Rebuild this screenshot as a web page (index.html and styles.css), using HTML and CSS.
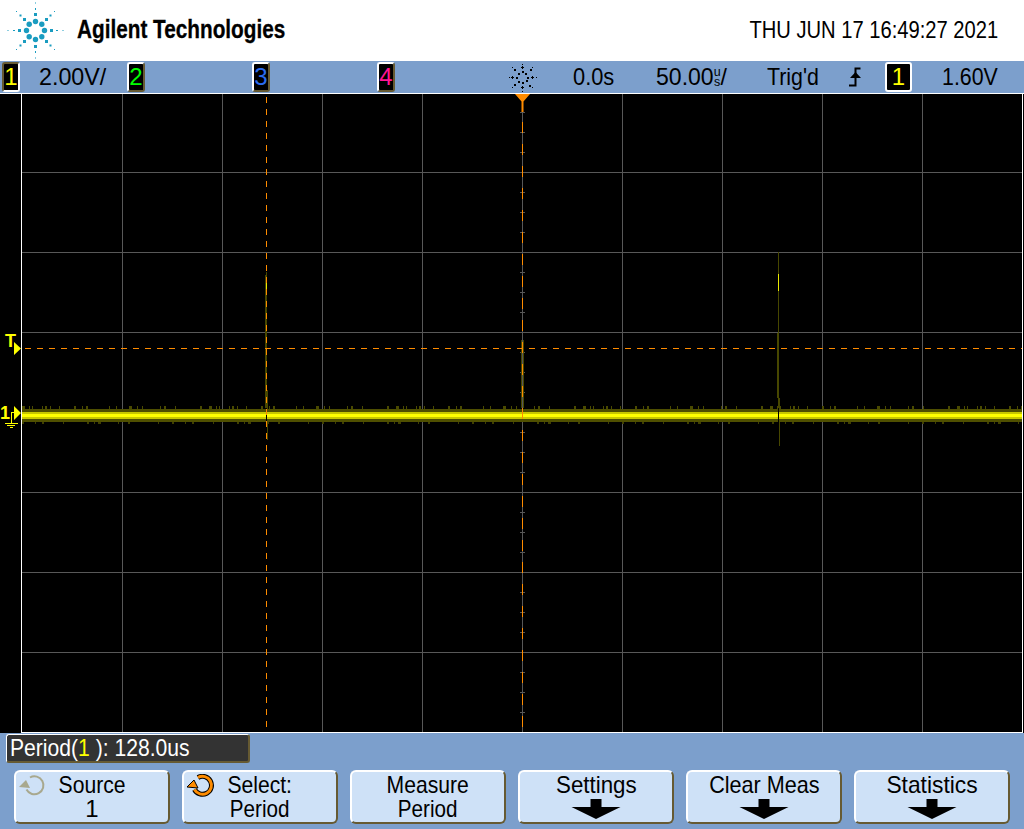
FILE: index.html
```html
<!DOCTYPE html>
<html lang="en">
<head>
    <meta charset="UTF-8">
    <title>Agilent Technologies scope capture</title>
    <link rel="stylesheet" href="styles.css">
</head>
<body>
    <svg class="defs" width="0" height="0">
        <defs>
            <g id="arm">
                <circle cx="0" cy="-9" r="2.7"/>
                <rect x="-1.5" y="-17.5" width="3" height="3"/>
                <rect x="-0.5" y="-22.5" width="1" height="2"/>
                <rect x="-0.5" y="-28" width="1" height="1"/>
                <circle cx="6.3" cy="-6.3" r="2.7"/>
                <rect x="9.5" y="-12.5" width="3" height="3"/>
                <rect x="14" y="-16" width="2" height="2"/>
                <rect x="18.5" y="-19.5" width="1" height="1"/>
            </g>
            <g id="star">
                <use href="#arm"/>
                <use href="#arm" transform="rotate(90)"/>
                <use href="#arm" transform="rotate(180)"/>
                <use href="#arm" transform="rotate(270)"/>
            </g>
            <g id="tinyarm">
                <rect x="-1" y="-6.5" width="2" height="2"/>
                <path d="M-0.5 -11.5h1v1h1v1h-1v1h-1v-1h-1v-1h1z"/>
                <rect x="-0.5" y="-14" width="1" height="1"/>
                <rect x="2.5" y="-5" width="2" height="2"/>
                <rect x="7" y="-8.5" width="2" height="2"/>
                <rect x="9.5" y="-10.5" width="1" height="1"/>
            </g>
            <g id="tinystar">
                <use href="#tinyarm"/>
                <use href="#tinyarm" transform="rotate(90)"/>
                <use href="#tinyarm" transform="rotate(180)"/>
                <use href="#tinyarm" transform="rotate(270)"/>
            </g>
            <path id="softarrow" d="M-5.5 0h11v8h19l-24.500 12l-24.500-12h19z"/>
            <path id="ring" d="M12 3.500A9 9 0 1 1 8.500 15.500"/>
            <path id="ringhead" d="M1 13L8 6L12 14z"/>
        </defs>
    </svg>

    <header class="top">
        <svg class="logo" width="71" height="57" viewBox="-35.5 -28.5 71 57"><use href="#star"/></svg>
        <div class="brand">Agilent Technologies</div>
        <div class="clock">THU JUN 17 16:49:27 2021</div>
    </header>

    <div class="status">
        <span class="chan c1">1</span>
        <span class="val volts">2.00V/</span>
        <span class="chan c2">2</span>
        <span class="chan c3">3</span>
        <span class="chan c4">4</span>
        <svg class="trigstar" width="29" height="29" viewBox="-14.5 -14.5 29 29"><use href="#tinystar"/></svg>
        <span class="val delay">0.0s</span>
        <span class="val tbase">50.00<span class="unit"><i>u</i><i>s</i></span>/</span>
        <span class="val trigd">Trig'd</span>
        <svg class="edge" width="12" height="20" viewBox="0 0 12 20"><path class="edge-line" d="M0 18.500h6.500V1.500h5"/><path d="M1 11L6.500 5L12 11z"/></svg>
        <span class="chan tsrc">1</span>
        <span class="val level">1.60V</span>
    </div>

    <svg class="plot" width="1024" height="640" viewBox="0 93 1024 640">
        <rect x="0" y="93" width="1024" height="640" fill="#000"/>
        <path class="grid" d="M122.500 94V732M222.500 94V732M322.500 94V732M422.500 94V732M522.500 94V732M622.500 94V732M722.500 94V732M822.500 94V732M922.500 94V732M22 172.500H1022M22 252.500H1022M22 332.500H1022M22 492.500H1022M22 572.500H1022M22 652.500H1022"/>
        <path class="grid" d="M520 112.500h5M520 132.500h5M520 152.500h5M520 192.500h5M520 212.500h5M520 232.500h5M520 272.500h5M520 292.500h5M520 312.500h5M520 352.500h5M520 372.500h5M520 392.500h5M520 432.500h5M520 452.500h5M520 472.500h5M520 512.500h5M520 532.500h5M520 552.500h5M520 592.500h5M520 612.500h5M520 632.500h5M520 672.500h5M520 692.500h5M520 712.500h5"/>

        <!-- glitches -->
        <path class="spike" d="M266.500 272V408M265.500 275V408M267.500 390V440M778.500 252V408M777.500 333V398M779.500 398V446M521.500 340V408M523.500 340V408"/>
        <path class="spike-hot" d="M266.500 277v14M778.500 274v17"/>

        <!-- trace -->
        <path class="noise" d="M22 407.500H1022"/>
        <path class="noise low" d="M22 423H1022"/>
        <rect x="22" y="409" width="1000" height="13" fill="#4f4f00"/>
        <rect x="22" y="412" width="1000" height="7" fill="#c8c800"/>
        <rect x="22" y="414" width="1000" height="3" fill="#ff0"/>
        <path class="spike-dark" d="M266.500 409v13M778.500 409v13"/>

        <!-- cursors -->
        <path class="cursor" d="M266.500 97V732M25 348.500H1022"/>
        <path class="cursor long" d="M522.500 100V732"/>
        <path class="trigmark" d="M515 94h15l-6.500 7.500v10.500h-2v-10.500z"/>

        <!-- left markers -->
        <text class="mark" x="5" y="347">T</text>
        <path class="yel" d="M14 342l7 6.500l-7 6.500zM14 406l7 7l-7 7z"/>
        <text class="mark" x="0" y="419">1</text>
        <path class="gnd" d="M14.500 412.500h-3.500v10M5 423.500h13M7 425.500h8M10 427.500h3"/>

        <path class="frame" d="M21.500 93V732.500H1022.500V93M0 93.500H1024"/>
    </svg>

    <div class="bottom">
        <div class="measure"><div class="measure-text">Period(<span class="hl">1</span> ): 128.0us</div></div>
        <div class="keys">
            <div class="key">
                <svg class="knob off" width="28" height="24" viewBox="0 0 28 24"><use class="knob-ring" href="#ring"/><use class="knob-head" href="#ringhead"/></svg>
                <span class="s88">Source</span><span>1</span>
            </div>
            <div class="key">
                <svg class="knob on" width="28" height="24" viewBox="0 0 28 24"><use class="knob-edge" href="#ring"/><use class="knob-ring" href="#ring"/><use class="knob-head" href="#ringhead"/></svg>
                <span class="s88">Select:</span><span class="s86">Period</span>
            </div>
            <div class="key"><span class="s88">Measure</span><span class="s86">Period</span></div>
            <div class="key">
                <span class="s93">Settings</span>
                <svg class="down" width="50" height="20" viewBox="-25 0 50 20"><use href="#softarrow"/></svg>
            </div>
            <div class="key">
                <span class="s90">Clear Meas</span>
                <svg class="down" width="50" height="20" viewBox="-25 0 50 20"><use href="#softarrow"/></svg>
            </div>
            <div class="key">
                <span class="s95">Statistics</span>
                <svg class="down" width="50" height="20" viewBox="-25 0 50 20"><use href="#softarrow"/></svg>
            </div>
        </div>
    </div>
</body>
</html>
```

FILE: styles.css
```css
html, body {
    margin: 0;
    padding: 0;
}

body {
    width: 1024px;
    height: 829px;
    overflow: hidden;
    background: #7c9fcc;
    color: #000;
    font-family: "Liberation Sans", Arial, sans-serif;
    font-size: 24px;
}

svg {
    display: block;
}

.defs {
    position: absolute;
}

/* header */
.top {
    height: 61px;
    background: #fff;
    display: flex;
    align-items: center;
}

.logo {
    fill: #1a9cc0;
    flex: none;
}

.brand {
    margin-left: 6px;
    font-size: 25px;
    font-weight: bold;
    white-space: nowrap;
    -webkit-text-stroke: 0.3px #000;
    padding-bottom: 2px;
    transform: scaleX(0.83);
    transform-origin: left center;
}

.clock {
    margin-left: auto;
    margin-right: 26px;
    padding-bottom: 2px;
    white-space: nowrap;
    transform: scaleX(0.84);
    transform-origin: right center;
}

/* status bar */
.status {
    height: 32px;
    display: flex;
    align-items: center;
}

.val {
    flex: none;
    white-space: nowrap;
    line-height: 32px;
    transform-origin: left center;
}

.chan {
    box-sizing: border-box;
    width: 18px;
    height: 30px;
    flex: none;
    background: #000;
    border: 2px solid;
    border-color: #fff #665a32 #665a32 #fff;
    border-radius: 3px;
    text-align: center;
    line-height: 26px;
    font-size: 24px;
}

.c1 {
    margin-left: 2px;
    color: #ff0;
    border-color: #665a32 #fff #fff #665a32;
}

.c2 {
    margin-left: 21px;
    color: #0f0;
}

.c3 {
    margin-left: 107px;
    color: #2a6cf0;
}

.c4 {
    margin-left: 107px;
    color: #ff1493;
}

.volts {
    margin-left: 19px;
    width: 67px;
    transform: scaleX(0.97);
}

.trigstar {
    margin-left: 113px;
    flex: none;
    fill: #000;
    shape-rendering: crispEdges;
}

.delay {
    margin-left: 36px;
    width: 41px;
    transform: scaleX(0.91);
}

.tbase {
    margin-left: 42px;
    width: 73px;
    display: flex;
    align-items: center;
    transform: scaleX(0.96);
}

.unit {
    display: flex;
    flex-direction: column;
    font-size: 13px;
    line-height: 10px;
    width: 9px;
    align-items: center;
}

.unit i {
    font-style: normal;
}

.trigd {
    margin-left: 38px;
    width: 51px;
    transform: scaleX(0.89);
}

.edge {
    margin-left: 31px;
    flex: none;
    fill: #000;
}

.edge-line {
    fill: none;
    stroke: #000;
    stroke-width: 2;
}

.tsrc {
    margin-left: 24px;
    width: 27px;
    color: #ff0;
    border-color: #fff;
}

.level {
    margin-left: 30px;
    width: 55px;
    transform: scaleX(0.89);
}

/* plot */
.grid {
    stroke: #585858;
    stroke-width: 1;
    fill: none;
    shape-rendering: crispEdges;
}

.spike {
    stroke: #474700;
    stroke-width: 1;
    fill: none;
    shape-rendering: crispEdges;
}

.spike-hot {
    stroke: #e8e800;
    stroke-width: 1;
    fill: none;
    shape-rendering: crispEdges;
}

.spike-dark {
    stroke: #000;
    stroke-width: 1;
    shape-rendering: crispEdges;
}

.noise {
    stroke: #4a4a00;
    stroke-width: 3;
    fill: none;
    stroke-dasharray: 3 4 1 2 1 9 1 2 2 3 1 8 1 14 2 6 1 3 2 21 1 6 1 12 3 5 1 4 1 17 1 3 2 9 1 24 2 7;
    shape-rendering: crispEdges;
}

.noise.low {
    stroke: #3f3f00;
    stroke-width: 2;
    stroke-dasharray: 2 11 1 6 2 19 1 23 2 5 1 3 3 17 1 9 2 28 1 13;
}

.cursor {
    stroke: #ff8c00;
    stroke-width: 1;
    fill: none;
    stroke-dasharray: 6 6;
    shape-rendering: crispEdges;
}

.cursor.long {
    stroke-dasharray: 11 11;
}

.trigmark {
    fill: #ff8c00;
}

.mark {
    fill: #ff0;
    font-size: 18px;
    font-weight: bold;
}

.yel {
    fill: #ff0;
}

.gnd {
    stroke: #ff0;
    stroke-width: 1;
    fill: none;
    shape-rendering: crispEdges;
}

.frame {
    stroke: #fff;
    stroke-width: 1;
    fill: none;
    shape-rendering: crispEdges;
}

/* bottom */
.bottom {
    padding-top: 1px;
}

.measure {
    box-sizing: border-box;
    width: 244px;
    height: 29px;
    margin-left: 6px;
    padding-left: 3px;
    background: #333;
    color: #fff;
    border: 1px solid;
    border-color: #fff #665a32 #665a32 #fff;
    border-width: 1px 2px 2px 1px;
    border-radius: 3px;
    line-height: 26px;
    white-space: nowrap;
}

.measure-text {
    transform: scaleX(0.88);
    transform-origin: left center;
}

.hl {
    color: #ff0;
}

.keys {
    display: flex;
    gap: 12px;
    margin: 7px 0 0 14px;
}

.key {
    box-sizing: border-box;
    width: 156px;
    height: 54px;
    position: relative;
    display: flex;
    flex-direction: column;
    align-items: center;
    background: #cee1f7;
    border: 2px solid;
    border-color: #fff #665a32 #665a32 #fff;
    border-radius: 6px;
    line-height: 24px;
    padding-top: 1px;
    flex: none;
}

.s86 {
    transform: scaleX(0.86);
}

.s88 {
    transform: scaleX(0.88);
}

.s90 {
    transform: scaleX(0.9);
}

.s93 {
    transform: scaleX(0.93);
}

.s95 {
    transform: scaleX(0.95);
}

.knob {
    position: absolute;
    left: 2px;
    top: 2px;
}

.knob-ring {
    fill: none;
    stroke-width: 2;
}

.off .knob-ring {
    stroke: #a8a88e;
}

.off .knob-head {
    fill: #a8a88e;
}

.on .knob-edge {
    fill: none;
    stroke: #000;
    stroke-width: 5;
}

.on .knob-ring {
    stroke: #ff8c00;
    stroke-width: 3;
}

.on .knob-head {
    fill: #ff8c00;
    stroke: #000;
    stroke-width: 1;
}

.down {
    margin-top: 2px;
    fill: #000;
}
```
